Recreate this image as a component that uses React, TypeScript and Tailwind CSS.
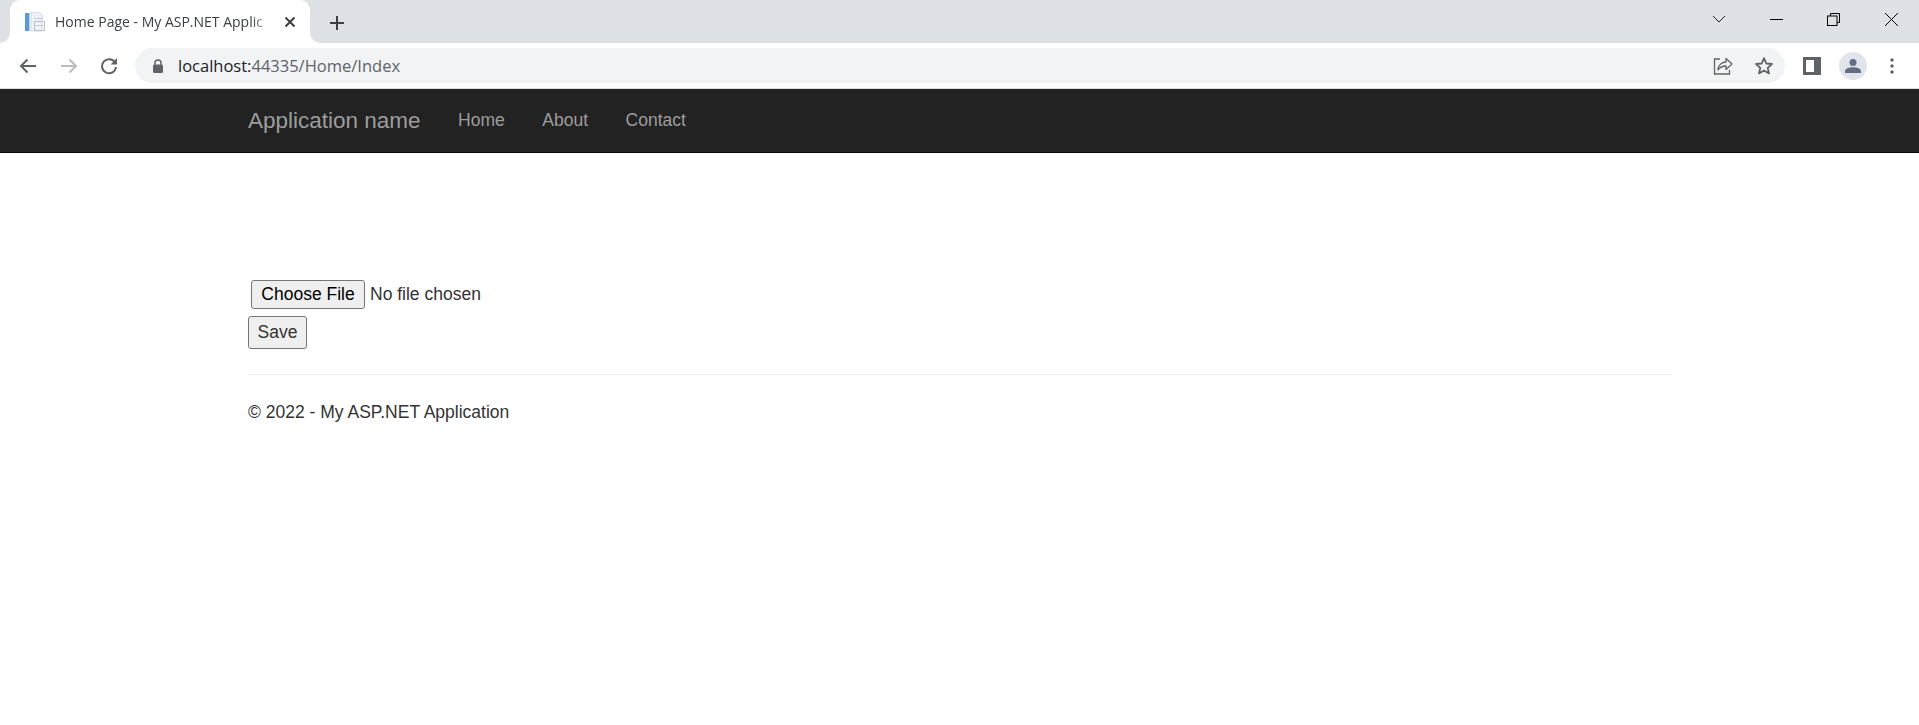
import { useState } from 'react'

const navLinks = ['Home', 'About', 'Contact']

function FaviconPage() {
  return (
    <svg width="20" height="20" viewBox="0 0 20 20" className="shrink-0">
      <rect x="0" y="1" width="4" height="18" fill="#5b9bd5" />
      <rect x="4" y="1" width="1" height="18" fill="#bcd6ee" />
      <path d="M6 0h8l3 3v16H6z" fill="#eef1f5" stroke="#d3d8df" />
      <rect x="9" y="6" width="9" height="1" fill="#c5ccd6" />
      <rect x="9" y="9" width="11" height="1" fill="#b9c2ce" />
      <rect x="9" y="9" width="1" height="9" fill="#b9c2ce" />
      <rect x="19" y="9" width="1" height="10" fill="#b9c2ce" />
      <rect x="9" y="13" width="11" height="1" fill="#c5ccd6" />
      <rect x="9" y="18" width="11" height="1" fill="#b9c2ce" />
    </svg>
  )
}

function BrowserChrome() {
  return (
    <div className="shrink-0">
      {/* tab strip */}
      <div className="h-[43px] bg-[#dee1e6] flex items-end pl-[10px]">
        <div className="relative w-[300px] h-[43px] bg-white rounded-t-[10px] flex items-center pl-[15px] pr-[14px]">
          <span className="absolute -left-[10px] bottom-0 w-[10px] h-[10px] bg-white">
            <span className="block w-full h-full bg-[#dee1e6] rounded-br-[10px]" />
          </span>
          <span className="absolute -right-[10px] bottom-0 w-[10px] h-[10px] bg-white">
            <span className="block w-full h-full bg-[#dee1e6] rounded-bl-[10px]" />
          </span>
          <FaviconPage />
          <span className="ml-[10px] w-[219px] whitespace-nowrap text-[14px] text-[#3c4043] [mask-image:linear-gradient(to_right,black_90%,transparent)]">
            Home Page - My ASP.NET Applic
          </span>
          <svg width="12" height="12" viewBox="0 0 12 12" className="ml-[10px] shrink-0">
            <path d="M1.500 1.500l9 9M10.500 1.500l-9 9" stroke="#3c4043" strokeWidth="2" fill="none" />
          </svg>
        </div>
        <svg width="16" height="16" viewBox="0 0 16 16" className="ml-[19px] mb-[12px]">
          <path d="M8 1v14M1 8h14" stroke="#3c4043" strokeWidth="2" fill="none" />
        </svg>
        <div className="flex-1" />
        <div className="self-start flex items-center h-[38px]">
          <svg width="14" height="8" viewBox="0 0 14 8" className="mr-[44px]">
            <path d="M1 1l6 6 6-6" stroke="#202124" strokeWidth="1" fill="none" />
          </svg>
          <svg width="13" height="1" viewBox="0 0 13 1" className="mr-[44px]">
            <rect width="13" height="1" fill="#000" />
          </svg>
          <svg width="13" height="13" viewBox="0 0 13 13" className="mr-[45px]">
            <path d="M3.500 3V.5h9v9H10" stroke="#000" fill="none" />
            <rect x=".5" y="3" width="9.500" height="9.500" stroke="#000" fill="none" />
          </svg>
          <svg width="13" height="13" viewBox="0 0 13 13" className="mr-[21px]">
            <path d="M0 0l13 13M13 0L0 13" stroke="#000" fill="none" />
          </svg>
        </div>
      </div>
      {/* toolbar */}
      <div className="h-[45px] bg-white flex items-center border-b border-[#dadce0] box-content">
        <svg width="18" height="16" viewBox="0 0 18 16" className="ml-[19px]">
          <path d="M17 8H2M8.500 1.500L2 8l6.500 6.500" stroke="#5f6368" strokeWidth="2" fill="none" />
        </svg>
        <svg width="18" height="16" viewBox="0 0 18 16" className="ml-[23px]">
          <path d="M1 8h15M9.500 1.500L16 8l-6.500 6.500" stroke="#babcbe" strokeWidth="2" fill="none" />
        </svg>
        <svg width="18" height="18" viewBox="0 0 18 18" className="ml-[22px]">
          <path d="M15 5.500A7 7 0 1 0 16 10" stroke="#5f6368" strokeWidth="2" fill="none" />
          <path d="M17 1v6.500h-6.500z" fill="#5f6368" />
        </svg>
        <div className="ml-[17px] w-[1650px] h-[35px] rounded-full bg-[#f1f3f4] flex items-center pl-[17px] pr-[11px]">
          <svg width="12" height="14" viewBox="0 0 12 14">
            <path d="M3 6V4a3 3 0 0 1 6 0v2" stroke="#5f6368" strokeWidth="1.500" fill="none" />
            <rect x="1" y="5.500" width="10" height="8.500" rx="1.500" fill="#5f6368" />
          </svg>
          <span className="ml-[14px] mt-[2px] text-[16.5px] text-[#5f6368] whitespace-nowrap">
            <span className="text-[#202124]">localhost:</span>44335/Home/Index
          </span>
          <div className="flex-1" />
          <svg width="20" height="20" viewBox="0 0 20 20" className="mr-[21px]">
            <path d="M7 3H1.500v15h15v-4" stroke="#5f6368" strokeWidth="1.300" fill="none" />
            <path d="M5 14c0-5 4-8 8-8V2.500L19 8l-6 5.500V10c-3.500 0-6 1-8 4z" stroke="#5f6368" strokeWidth="1.300" strokeLinejoin="round" fill="none" />
          </svg>
          <svg width="20" height="20" viewBox="0 0 20 20">
            <path d="M10 2.200l2.300 5.300 5.700.5-4.300 3.800 1.300 5.600L10 14.400l-5 3 1.300-5.600L2 8l5.700-.5z" stroke="#5f6368" strokeWidth="1.800" strokeLinejoin="round" fill="none" />
          </svg>
        </div>
        <svg width="18" height="18" viewBox="0 0 18 18" className="ml-[18px]">
          <path fillRule="evenodd" d="M0 0h18v18H0zM3 3v12h8V3z" fill="#5f6368" />
        </svg>
        <div className="ml-[18px] w-[28px] h-[28px] rounded-full bg-[#e1e4ea] flex items-center justify-center">
          <svg width="18" height="14" viewBox="0 0 18 14">
            <circle cx="9" cy="3.500" r="3.500" fill="#5f6d85" />
            <path d="M1 14v-1.500C1 9.500 5 8.200 9 8.200s8 1.300 8 4.300V14z" fill="#5f6d85" />
          </svg>
        </div>
        <svg width="4" height="16" viewBox="0 0 4 16" className="ml-[23px]">
          <circle cx="2" cy="2" r="1.700" fill="#5f6368" />
          <circle cx="2" cy="8" r="1.700" fill="#5f6368" />
          <circle cx="2" cy="14" r="1.700" fill="#5f6368" />
        </svg>
      </div>
    </div>
  )
}

export default function App() {
  const [fileName, setFileName] = useState('')

  return (
    <div className="min-h-screen bg-white flex flex-col font-['Liberation_Sans',Arial,sans-serif] text-[17.5px] text-[#333]">
      <div className="font-['Open_Sans',sans-serif]">
        <BrowserChrome />
      </div>

      <nav className="h-[64px] bg-[#222] border-b border-[#080808] shrink-0">
        <div className="w-[1455px] mx-auto pl-[16px] pr-[15px] h-full flex items-center">
          <a href="#" className="text-[22.5px] text-[#9d9d9d] mr-[37.5px]">Application name</a>
          <ul className="flex gap-[37.5px]">
            {navLinks.map(link => (
              <li key={link}>
                <a href="#" className="text-[#9d9d9d]">{link}</a>
              </li>
            ))}
          </ul>
        </div>
      </nav>

      <main className="w-[1455px] mx-auto pl-[16px] pr-[15px] pt-[127px]">
        <form onSubmit={e => e.preventDefault()}>
          <input
            type="file"
            title={fileName}
            onChange={e => setFileName(e.target.value)}
            className="block h-[29px] text-[#333] text-[17.5px] ml-[3px] file:h-[29px] file:w-[114px] file:mr-[5px] file:px-0 file:bg-[#efefef] file:border file:border-[#767676] file:rounded-[3px] file:text-black"
          />
          <button type="submit" className="block mt-[7px] h-[33px] w-[59px] bg-[#efefef] border border-[#767676] rounded-[3px] text-[#333]">
            Save
          </button>
        </form>
        <hr className="mt-[25px] border-t border-[#eee]" />
        <footer className="mt-[24px]">
          <p>© 2022 - My ASP.NET Application</p>
        </footer>
      </main>
    </div>
  )
}
